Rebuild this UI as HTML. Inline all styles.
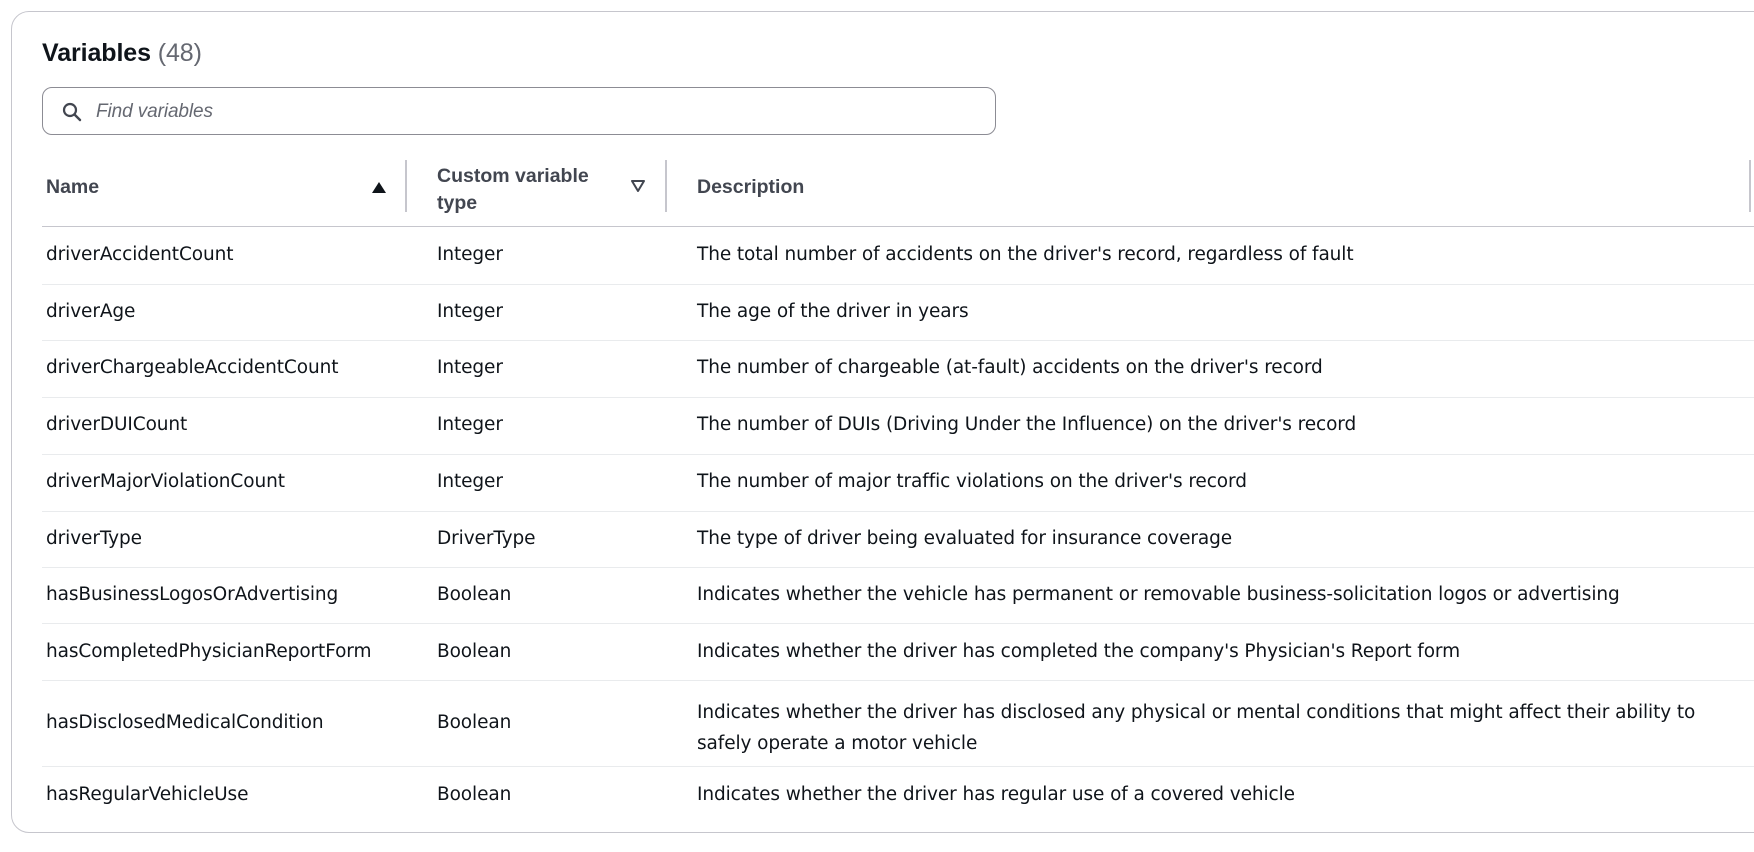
<!DOCTYPE html>
<html><head><meta charset="utf-8"><style>
*{margin:0;padding:0;box-sizing:border-box}
body{width:1754px;height:852px;background:#fff;font-family:"Liberation Sans",sans-serif;color:#0f141a;overflow:hidden;position:relative}
.card{position:absolute;left:11px;top:11px;width:1800px;height:822px;border:1px solid #c6c6cd;border-radius:18px}
.t{position:absolute;font-size:18.5px;white-space:nowrap;line-height:24px;font-family:"DejaVu Sans",sans-serif;letter-spacing:-0.1px}
.line{position:absolute;left:42px;width:1712px;height:1px;background:#e9ebed}
.vd{position:absolute;width:2px;background:#c6c6cd}
.h{font-weight:bold;color:#424650;font-family:"Liberation Sans",sans-serif;font-size:19.5px;letter-spacing:0}
</style></head><body>
<div class="card"></div>
<div class="t" style="left:42px;top:38px;font-size:25px;line-height:30px;font-weight:bold;font-family:'Liberation Sans',sans-serif">Variables <span style="font-weight:normal;color:#656871">(48)</span></div>
<div style="position:absolute;left:42px;top:87px;width:954px;height:48px;border:1px solid #8c8c94;border-radius:10px"></div>
<svg style="position:absolute;left:62px;top:102px" width="20" height="20" viewBox="0 0 20 20"><circle cx="8" cy="8" r="6" fill="none" stroke="#424650" stroke-width="2.2"/><path d="M12.5 12.5L18 18" stroke="#424650" stroke-width="2.4" stroke-linecap="round"/></svg>
<div class="t" style="left:96px;top:100px;font-style:italic;color:#656871;font-family:'Liberation Sans',sans-serif;font-size:19px">Find variables</div>
<div class="t h" style="left:46px;top:175px">Name</div>
<svg style="position:absolute;left:371px;top:180px" width="16" height="14"><path d="M1 13L8 2L15 13Z" fill="#0f141a"/></svg>
<div class="vd" style="left:405px;top:160px;height:52px"></div>
<div class="t h" style="left:437px;top:163px;line-height:27px">Custom variable<br>type</div>
<svg style="position:absolute;left:630px;top:179px" width="16" height="14"><path d="M2 2L14 2L8 12Z" fill="none" stroke="#424650" stroke-width="2" stroke-linejoin="round"/></svg>
<div class="vd" style="left:665px;top:160px;height:52px"></div>
<div class="t h" style="left:697px;top:175px">Description</div>
<div class="vd" style="left:1749px;top:160px;height:52px"></div>
<div class="line" style="top:226px;background:#c6c6cd"></div>

<div class="t" style="left:46px;top:243px">driverAccidentCount</div><div class="t" style="left:437px;top:243px">Integer</div><div class="t" style="left:697px;top:243px">The total number of accidents on the driver's record, regardless of fault</div>
<div class="line" style="top:284px"></div>
<div class="t" style="left:46px;top:300px">driverAge</div><div class="t" style="left:437px;top:300px">Integer</div><div class="t" style="left:697px;top:300px">The age of the driver in years</div>
<div class="line" style="top:340px"></div>
<div class="t" style="left:46px;top:356px">driverChargeableAccidentCount</div><div class="t" style="left:437px;top:356px">Integer</div><div class="t" style="left:697px;top:356px">The number of chargeable (at-fault) accidents on the driver's record</div>
<div class="line" style="top:397px"></div>
<div class="t" style="left:46px;top:413px">driverDUICount</div><div class="t" style="left:437px;top:413px">Integer</div><div class="t" style="left:697px;top:413px">The number of DUIs (Driving Under the Influence) on the driver's record</div>
<div class="line" style="top:454px"></div>
<div class="t" style="left:46px;top:470px">driverMajorViolationCount</div><div class="t" style="left:437px;top:470px">Integer</div><div class="t" style="left:697px;top:470px">The number of major traffic violations on the driver's record</div>
<div class="line" style="top:511px"></div>
<div class="t" style="left:46px;top:527px">driverType</div><div class="t" style="left:437px;top:527px">DriverType</div><div class="t" style="left:697px;top:527px">The type of driver being evaluated for insurance coverage</div>
<div class="line" style="top:567px"></div>
<div class="t" style="left:46px;top:583px">hasBusinessLogosOrAdvertising</div><div class="t" style="left:437px;top:583px">Boolean</div><div class="t" style="left:697px;top:583px">Indicates whether the vehicle has permanent or removable business-solicitation logos or advertising</div>
<div class="line" style="top:623px"></div>
<div class="t" style="left:46px;top:640px">hasCompletedPhysicianReportForm</div><div class="t" style="left:437px;top:640px">Boolean</div><div class="t" style="left:697px;top:640px">Indicates whether the driver has completed the company's Physician's Report form</div>
<div class="line" style="top:680px"></div>
<div class="t" style="left:46px;top:711px">hasDisclosedMedicalCondition</div><div class="t" style="left:437px;top:711px">Boolean</div><div class="t" style="left:697px;top:697px;line-height:31px">Indicates whether the driver has disclosed any physical or mental conditions that might affect their ability to<br>safely operate a motor vehicle</div>
<div class="line" style="top:766px"></div>
<div class="t" style="left:46px;top:783px">hasRegularVehicleUse</div><div class="t" style="left:437px;top:783px">Boolean</div><div class="t" style="left:697px;top:783px">Indicates whether the driver has regular use of a covered vehicle</div>
</body></html>
